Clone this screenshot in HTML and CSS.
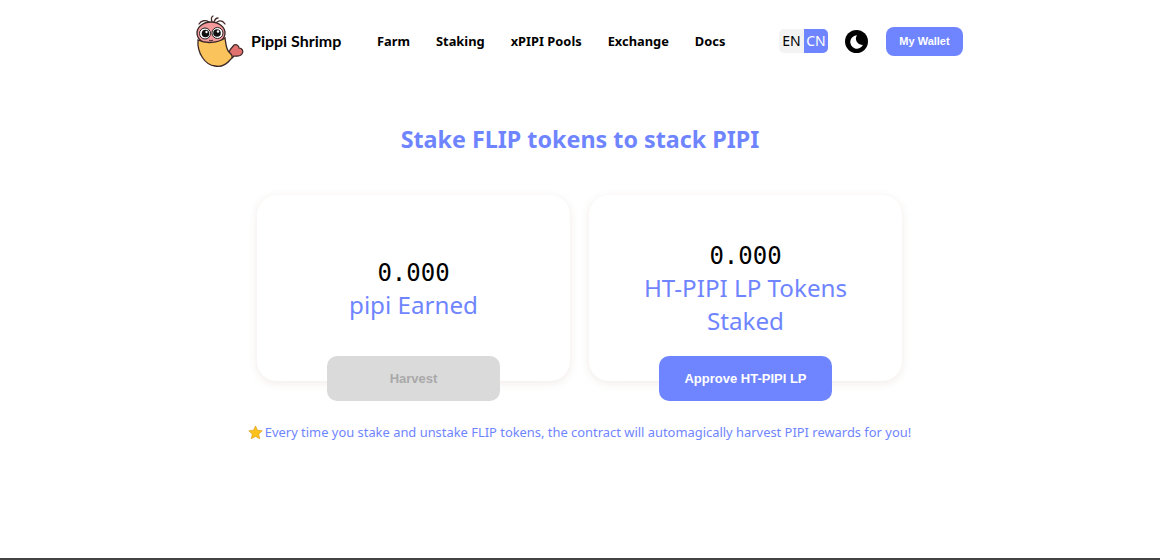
FILE: index.html
```html
<!DOCTYPE html>
<html lang="en">
<head>
<meta charset="utf-8">
<title>Pippi Shrimp</title>
<link rel="stylesheet" href="styles.css">
</head>
<body>
<div class="page">
  <header class="header">
    <a class="brand">
      <svg class="logo" viewBox="0 0 60 60" width="60" height="60">
        <path d="M22 11C21 8 21 6 23 5M24 11C25 8 26 7 28 7M9 13C11 9 16 9 19 11M27 11C30 9 33 10 35 13" fill="none" stroke="#4a2a2a" stroke-width="1.300" stroke-linecap="round"/>
        <path d="M38 43C40 38 42 36 44 34C47 33 49 35 49 37C52 37 54 40 52 43C50 46 46 45 44 45C43 47 41 48 39 47Z" fill="#e0716f" stroke="#3a2626" stroke-width="1.200"/>
        <ellipse cx="21" cy="22" rx="14" ry="11" fill="#f29a9c" stroke="#3a2626" stroke-width="1.300"/>
        <path d="M8 29C16 33 28 32 35 27C36 33 36 38 39 41C42 44 44 46 40 49C36 54 30 56 25 55C15 54 7 42 8 29Z" fill="#fbc35b" stroke="#3a2626" stroke-width="1.300"/>
        <path d="M19 29C20 30 22 30 23 29" fill="none" stroke="#3a2626" stroke-width="1"/>
        <circle cx="15" cy="22.500" r="5.500" fill="#fff" stroke="#222" stroke-width="1"/>
        <circle cx="27.500" cy="22" r="5.500" fill="#fff" stroke="#222" stroke-width="1"/>
        <circle cx="15.500" cy="22.500" r="3.800" fill="#111"/>
        <circle cx="27" cy="22" r="3.800" fill="#111"/>
        <circle cx="16.500" cy="21" r="1.200" fill="#fff"/>
        <circle cx="28" cy="20.500" r="1.200" fill="#fff"/>
      </svg>
      <span class="brand-name">Pippi Shrimp</span>
    </a>
    <nav class="nav">
      <a>Farm</a>
      <a>Staking</a>
      <a>xPIPI Pools</a>
      <a>Exchange</a>
      <a>Docs</a>
    </nav>
    <div class="lang">
      <span class="lang-item">EN</span>
      <span class="lang-item lang-active">CN</span>
    </div>
    <svg class="moon" viewBox="0 0 24 24" width="23" height="23">
      <circle cx="12" cy="12" r="12" fill="#000"/>
      <path d="M12.500 5.500A7 7 0 1 0 18.800 15.500A6.500 6.500 0 0 1 12.500 5.500Z" fill="#fff"/>
    </svg>
    <button class="wallet">My Wallet</button>
  </header>

  <main class="main">
    <h1 class="title">Stake FLIP tokens to stack PIPI</h1>
    <div class="cards">
      <section class="card">
        <div class="amount">0.000</div>
        <div class="label">pipi Earned</div>
        <button class="action action-disabled">Harvest</button>
      </section>
      <section class="card">
        <div class="amount">0.000</div>
        <div class="label">HT-PIPI LP Tokens Staked</div>
        <button class="action">Approve HT-PIPI LP</button>
      </section>
    </div>
    <p class="note">
      <svg class="star" viewBox="0 0 24 24" width="15" height="15">
        <path d="M12 1.500L15.200 8.300L22.800 9.300L17.200 14.500L18.700 22L12 18.300L5.300 22L6.800 14.500L1.200 9.300L8.800 8.300Z" fill="#fcc21b" stroke="#d99a1c" stroke-width="1"/>
      </svg>
      <span>Every time you stake and unstake FLIP tokens, the contract will automagically harvest PIPI rewards for you!</span>
    </p>
  </main>
  <div class="bottom-line"></div>
</div>
</body>
</html>
```
FILE: styles.css
```css
* { box-sizing: border-box; }
html, body { margin: 0; padding: 0; height: 100%; }
body {
  background: #fff;
  font-family: "Noto Sans", sans-serif;
  color: #000;
  overflow: hidden;
}
.page {
  height: 560px;
  display: flex;
  flex-direction: column;
}
.header {
  height: 82px;
  padding-left: 190px;
  display: flex;
  align-items: center;
}
.brand {
  display: flex;
  align-items: center;
  width: 187px;
}
.logo { flex: none; }
.brand-name {
  font-family: Lato, sans-serif;
  font-size: 16px;
  font-weight: 700;
  margin: -2px 0 0 1px;
  white-space: nowrap;
}
.nav {
  display: flex;
  gap: 26px;
  font-size: 12.850px;
  font-weight: 700;
  width: 402px;
}
.lang {
  display: flex;
  height: 24px;
  border-radius: 5px;
  overflow: hidden;
  font-size: 14px;
  line-height: 24px;
}
.lang-item {
  width: 25px;
  text-align: center;
  background: #f3f3f3;
}
.lang-active { width: 24px; background: #6f85ff; color: #fff; }
.moon { margin-left: 17px; flex: none; }
.wallet {
  margin-left: 18px;
  width: 77px;
  height: 29px;
  padding: 0;
  border: 0;
  border-radius: 8px;
  background: #6f85ff;
  color: #fff;
  font-family: "Liberation Sans", sans-serif;
  font-size: 11px;
  font-weight: 700;
}
.main { flex: 1; display: flex; flex-direction: column; align-items: center; }
.title {
  margin: 39px 0 0;
  font-size: 23.300px;
  line-height: 36px;
  font-weight: 700;
  color: #6f85ff;
}
.cards {
  display: flex;
  gap: 19px;
  margin: 38px 1px 0 0;
}
.card {
  position: relative;
  width: 313px;
  height: 186px;
  padding: 0 40px 1px;
  border-radius: 20px;
  background: #fff;
  box-shadow: 0 2px 8px rgba(170, 130, 110, 0.16);
  display: flex;
  flex-direction: column;
  justify-content: center;
  text-align: center;
}
.amount {
  padding-top: 2px;
  font-family: "DejaVu Sans Mono", monospace;
  font-size: 24px;
  line-height: 33px;
}
.label {
  margin-top: -2px;
  font-size: 24.200px;
  line-height: 33px;
  color: #6f85ff;
}
.action {
  position: absolute;
  left: 70px;
  bottom: -20px;
  width: 173px;
  height: 45px;
  padding: 0;
  border: 0;
  border-radius: 10px;
  background: #6f85ff;
  color: #fff;
  font-family: "Liberation Sans", sans-serif;
  font-size: 13px;
  font-weight: 700;
}
.action-disabled { background: #dadada; color: #a9a9a9; }
.note {
  margin: 40px 1px 0 0;
  display: flex;
  align-items: center;
  gap: 2px;
  font-size: 12.920px;
  line-height: 22px;
  color: #6f85ff;
}
.star { flex: none; }
.bottom-line {
  height: 2px;
  background: #444;
}
```
